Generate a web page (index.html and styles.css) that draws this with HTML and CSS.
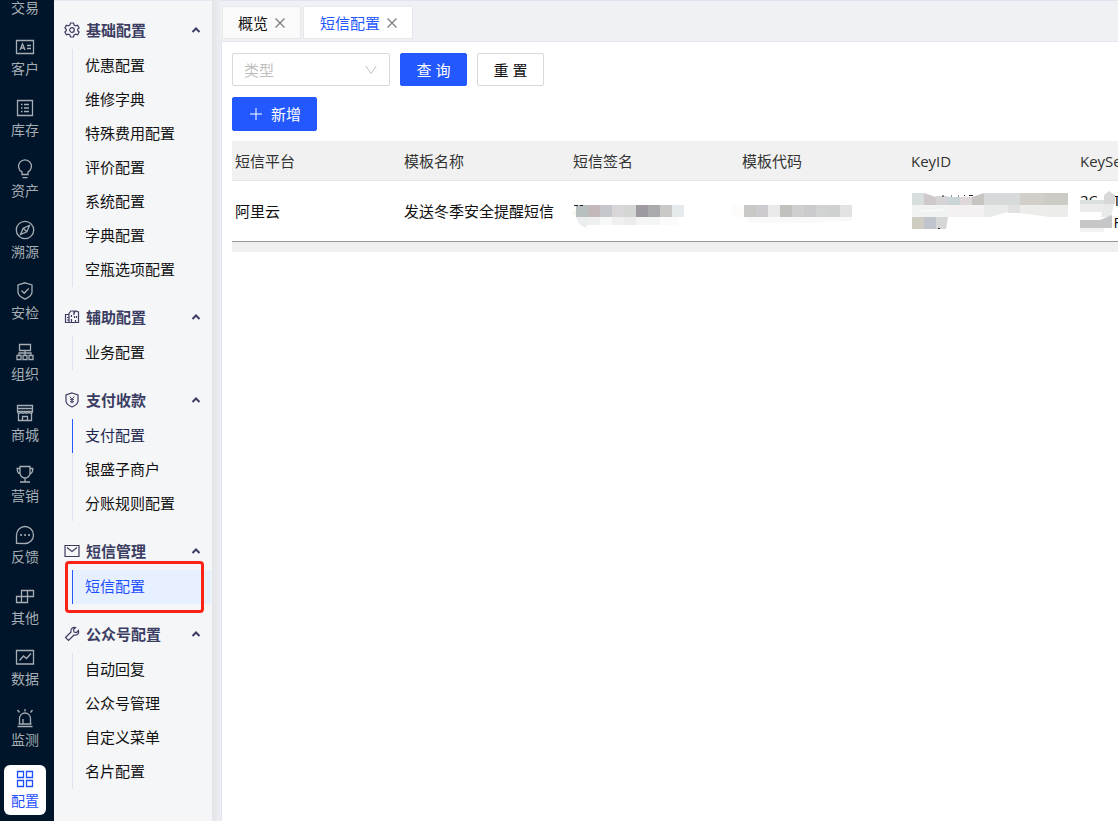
FILE: index.html
```html
<!DOCTYPE html>
<html lang="zh-CN">
<head>
<meta charset="utf-8">
<meta name="viewport" content="width=device-width, initial-scale=1">
<title>短信配置</title>
<link rel="stylesheet" href="styles.css">
</head>
<body>
<div class="app">
  <nav class="rail" aria-label="主导航">
    <a class="rail-item" href="#"><svg class="rail-icon" viewBox="0 0 20 20"><path d="M3 7h14l-4-4M17 13H3l4 4"/></svg><span>交易</span></a>
    <a class="rail-item" href="#"><svg class="rail-icon" viewBox="0 0 20 20"><path d="M1.500 3.500h17v13h-17zM5 13l2.500-6L10 13M6 11h3M12 8.500h4M12 11.500h4"/></svg><span>客户</span></a>
    <a class="rail-item" href="#"><svg class="rail-icon" viewBox="0 0 20 20"><path d="M2.500 2.500h15v15h-15zM9 6.500h5M9 10h5M9 13.500h5M6 6.500h1.500M6 10h1.500M6 13.500h1.500"/></svg><span>库存</span></a>
    <a class="rail-item" href="#"><svg class="rail-icon" viewBox="0 0 20 20"><path d="M7 15.500v-2.600a6.400 6.400 0 1 1 6 0v2.600zM7.500 18.700h5"/></svg><span>资产</span></a>
    <a class="rail-item" href="#"><svg class="rail-icon" viewBox="0 0 20 20"><circle cx="10" cy="10" r="8.700"/><path d="M14.500 5.500l-2.700 6.300-6.300 2.700 2.700-6.300zM8.200 8.200l3.600 3.600"/></svg><span>溯源</span></a>
    <a class="rail-item" href="#"><svg class="rail-icon" viewBox="0 0 20 20"><path d="M10 1.800l7 2.200v7c0 3-2.500 5.200-7 7.200-4.500-2-7-4.200-7-7.200V4zM6.500 9.500l2.700 2.700 4.500-4.700"/></svg><span>安检</span></a>
    <a class="rail-item" href="#"><svg class="rail-icon" viewBox="0 0 20 20"><path d="M4.500 2.500h11v6h-11zM10 8.500v5M4 13.500v-2.500h12v2.500M2 13.500h4v4H2zM8 13.500h4v4H8zM14 13.500h4v4h-4z"/></svg><span>组织</span></a>
    <a class="rail-item" href="#"><svg class="rail-icon" viewBox="0 0 20 20"><path d="M2.500 2.500h15v6h-15zM2.500 5.500h15M3.500 10v7.500h13V10M7.500 17.500v-4h5v4"/><path d="M2.500 8.500c0 2.300 3.700 2.300 3.700 0 0 2.300 3.800 2.300 3.800 0 0 2.300 3.800 2.300 3.800 0 0 2.300 3.700 2.300 3.700 0"/></svg><span>商城</span></a>
    <a class="rail-item" href="#"><svg class="rail-icon" viewBox="0 0 20 20"><path d="M5 2.500h10v6.500a5 5 0 0 1-10 0zM5 4.500H2.200c0 3 .5 5 3.200 5.500M15 4.500h2.800c0 3-.5 5-3.200 5.500M10 14v4M5 18h10"/></svg><span>营销</span></a>
    <a class="rail-item" href="#"><svg class="rail-icon" viewBox="0 0 20 20"><path d="M1.500 18.300V10A8.500 8.500 0 1 1 10 18.500z"/><path class="dots" d="M6 10h.1M10 10h.1M14 10h.1"/></svg><span>反馈</span></a>
    <a class="rail-item" href="#"><svg class="rail-icon" viewBox="0 0 20 20"><path d="M6.500 4.500h12v6h-12zM12.500 4.500v12M1.500 10.500h11v6h-11zM6.500 10.500v6"/></svg><span>其他</span></a>
    <a class="rail-item" href="#"><svg class="rail-icon" viewBox="0 0 20 20"><path d="M1.500 3.500h17v13.500h-17zM4.500 13.500l4-4.500 3 2.500 4.500-5"/></svg><span>数据</span></a>
    <a class="rail-item" href="#"><svg class="rail-icon" viewBox="0 0 20 20"><path d="M4.500 16V10.500a5.500 5.500 0 0 1 11 0V16M2.500 18.500h15M3.500 16h13M8 16v-5M10 3.500V1M4.500 4.500L2.500 2M15.500 4.500l2-2.500"/></svg><span>监测</span></a>
    <a class="rail-item is-active" href="#" aria-current="page"><svg class="rail-icon" viewBox="0 0 20 20"><path d="M2.500 2.500h6v6h-6zM11.500 2.500h6v6h-6zM2.500 11.500h6v6h-6zM11.500 11.500h6v6h-6z"/></svg><span>配置</span></a>
  </nav>

  <aside class="menu" aria-label="配置菜单">
    <section class="group">
      <button class="group-head" type="button" aria-expanded="true"><svg class="group-icon" viewBox="0 0 16 16"><path d="M6.500 1h3l.6 2 1.500.9 2-.6 1.500 2.600L13.700 7.300v1.400l1.400 1.400-1.500 2.600-2-.6-1.500.9-.6 2h-3l-.6-2-1.500-.9-2 .6L.9 10.100l1.400-1.400V7.300L.9 5.900l1.500-2.600 2 .6L5.900 3z"/><circle cx="8" cy="8" r="2.300"/></svg><span>基础配置</span><svg class="caret" viewBox="0 0 10 10"><path d="M1.500 7L5 3.500 8.500 7"/></svg></button>
      <ul class="group-list">
        <li><a class="entry" href="#">优惠配置</a></li>
        <li><a class="entry" href="#">维修字典</a></li>
        <li><a class="entry" href="#">特殊费用配置</a></li>
        <li><a class="entry" href="#">评价配置</a></li>
        <li><a class="entry" href="#">系统配置</a></li>
        <li><a class="entry" href="#">字典配置</a></li>
        <li><a class="entry" href="#">空瓶选项配置</a></li>
      </ul>
    </section>
    <section class="group">
      <button class="group-head" type="button" aria-expanded="true"><svg class="group-icon" viewBox="0 0 16 16"><path d="M5 13.500H1.500v-8H5M5 13.500v-9l2-2.500h3v4M10 4.500l1.500-2.500 3 1v10.500H5M3 8.500h2M3 11h2M7.500 6v2M7.500 10v3.500M10.500 7v2M12.500 7v2M11.500 11v2.500"/></svg><span>辅助配置</span><svg class="caret" viewBox="0 0 10 10"><path d="M1.500 7L5 3.500 8.500 7"/></svg></button>
      <ul class="group-list">
        <li><a class="entry" href="#">业务配置</a></li>
      </ul>
    </section>
    <section class="group">
      <button class="group-head" type="button" aria-expanded="true"><svg class="group-icon" viewBox="0 0 16 16"><path d="M8 1l6 2v6c0 2.500-2.500 4.500-6 6-3.500-1.500-6-3.500-6-6V3z"/><path class="thin" d="M5.800 4.500L8 7.500l2.200-3M8 7.500V11.500M6 7.700h4M6 9.700h4"/></svg><span>支付收款</span><svg class="caret" viewBox="0 0 10 10"><path d="M1.500 7L5 3.500 8.500 7"/></svg></button>
      <ul class="group-list">
        <li><a class="entry is-marked" href="#">支付配置</a></li>
        <li><a class="entry" href="#">银盛子商户</a></li>
        <li><a class="entry" href="#">分账规则配置</a></li>
      </ul>
    </section>
    <section class="group">
      <button class="group-head" type="button" aria-expanded="true"><svg class="group-icon" viewBox="0 0 16 16"><path d="M1 2.500h14v11H1zM3 4.500L8 8.500l5-4"/></svg><span>短信管理</span><svg class="caret" viewBox="0 0 10 10"><path d="M1.500 7L5 3.500 8.500 7"/></svg></button>
      <ul class="group-list">
        <li class="highlighted"><a class="entry is-active" href="#" aria-current="page">短信配置</a></li>
      </ul>
    </section>
    <section class="group">
      <button class="group-head" type="button" aria-expanded="true"><svg class="group-icon" viewBox="0 0 16 16"><path d="M11.500 1.500L9.500 3.500l.5 2.500 2.500.5 2-2c.8 2.800-1.500 5.300-4.500 4.500L4.500 14.500 1.500 11.500 7 6c-.8-3 1.700-5.300 4.500-4.500z"/></svg><span>公众号配置</span><svg class="caret" viewBox="0 0 10 10"><path d="M1.500 7L5 3.500 8.500 7"/></svg></button>
      <ul class="group-list">
        <li><a class="entry" href="#">自动回复</a></li>
        <li><a class="entry" href="#">公众号管理</a></li>
        <li><a class="entry" href="#">自定义菜单</a></li>
        <li><a class="entry" href="#">名片配置</a></li>
      </ul>
    </section>
  </aside>

  <main class="main">
    <div class="tabs">
      <div class="tab"><a href="#">概览</a><button class="tab-close" type="button" aria-label="关闭概览"><svg viewBox="0 0 12 12"><path d="M1.500 1.500l9 9M10.500 1.500l-9 9"/></svg></button></div>
      <div class="tab is-active"><a href="#">短信配置</a><button class="tab-close" type="button" aria-label="关闭短信配置"><svg viewBox="0 0 12 12"><path d="M1.500 1.500l9 9M10.500 1.500l-9 9"/></svg></button></div>
    </div>

    <div class="content">
      <form class="filters">
        <div class="select-box">
          <select class="select" aria-label="类型"><option>类型</option></select>
          <svg class="select-arrow" viewBox="0 0 12 12"><path d="M.8 2L6 9.500 11.200 2"/></svg>
        </div>
        <button class="btn btn-primary" type="button">查 询</button>
        <button class="btn" type="button">重 置</button>
      </form>
      <div class="actions">
        <button class="btn btn-primary btn-add" type="button"><svg class="plus" viewBox="0 0 14 14"><path d="M7 1v12M1 7h12"/></svg><span>新增</span></button>
      </div>

      <div class="table-wrap">
        <table class="table">
          <thead>
            <tr><th>短信平台</th><th>模板名称</th><th>短信签名</th><th>模板代码</th><th>KeyID</th><th>KeySecret</th></tr>
          </thead>
          <tbody>
            <tr>
              <td>阿里云</td>
              <td>发送冬季安全提醒短信</td>
              <td>
                <svg class="mask" width="120" height="36" viewBox="0 0 120 36" aria-hidden="true">
                  <path fill="#f8f5ef" d="M-2 20l5-4v7z"/>
                  <path fill="#b8bfc1" d="M3 12h12v12H3z"/><path fill="#c3b9bb" d="M15 12h12v12H15z"/><path fill="#c5c7cd" d="M27 12h12v12H27z"/><path fill="#d8d6d8" d="M39 12h12v12H39z"/><path fill="#d4d6d4" d="M51 12h12v12H51z"/><path fill="#9f99a1" d="M63 12h12v12H63z"/><path fill="#aaaaad" d="M75 12h12v12H75z"/><path fill="#c9c8c7" d="M87 12h12v12H87z"/><path fill="#e5eaec" d="M99 12h12v12H99z"/>
                  <path stroke="#222" d="M1 12.500h4M7 12.500h3"/>
                  <path fill="#ebeeee" d="M3 24h12v8l-3 3-6-4z"/><path fill="#f0eff0" d="M15 24h12v8H15z"/><path fill="#f7f9f8" d="M27 24h12v8H27z"/><path fill="#f0f0f0" d="M39 24h12v8H39z"/><path fill="#ececed" d="M51 24h12v8H51z"/><path fill="#f4f5f5" d="M63 24h24v8H63z"/><path fill="#fbfbfb" d="M87 24h19v8H87z"/>
                </svg>
              </td>
              <td>
                <svg class="mask" width="120" height="36" viewBox="0 0 120 36" aria-hidden="true">
                  <path fill="#fdfcfa" d="M-10 12H2v12h-12z"/>
                  <path fill="#c8c9c7" d="M2 12h12v12H2z"/><path fill="#cecbd0" d="M14 12h12v12H14z"/><path fill="#eaeaeb" d="M26 12h12v12H26z"/><path fill="#c1c1bd" d="M38 12h12v12H38z"/><path fill="#d0cfcf" d="M50 12h12v12H50z"/><path fill="#cbcbcd" d="M62 12h12v12H62z"/><path fill="#d1d3d3" d="M74 12h12v12H74z"/><path fill="#cfd1d0" d="M86 12h12v12H86z"/><path fill="#e3e3e4" d="M98 12h12v12H98z"/>
                  <path fill="#f8f9f8" d="M2 24h108v4H84l-8 2H8z"/>
                </svg>
              </td>
              <td>
                <svg class="mask" width="160" height="36" viewBox="0 0 160 36" aria-hidden="true">
                  <path fill="#d8dddd" d="M1 0h12v12H1z"/><path fill="#cfc8cd" d="M13 0l12 4v8H13z"/><path fill="#d5d3d6" d="M25 3h12v9H25z"/><path fill="#cbd5d8" d="M37 4h12v8H37z"/><path fill="#dfd8d8" d="M49 4h12v8H49z"/><path fill="#c6c5c2" d="M61 4l12-4v12H61z"/><path fill="#d7dada" d="M73 0h36v12H73z"/><path fill="#d2cec9" d="M109 0h24v12h-24z"/><path fill="#cdcbc5" d="M133 0h24v12h-24z"/>
                  <path stroke="#222" d="M31 3h2M40 3h1M47 3h1M53 2.500h1M58 2.500h4"/>
                  <path fill="#f1f2f2" d="M1 12h36v12H1z"/><path fill="#f3f1f1" d="M37 12h36v12H37z"/><path fill="#e9eaea" d="M73 12h24v7l-18 5h-6z"/><path fill="#e1e1e2" d="M97 12h12v8H97z"/><path fill="#ececeb" d="M109 12h48v12h-18l-30-4z"/>
                  <path stroke="#fff" d="M9 18l24-1"/>
                  <path fill="#cfccc2" d="M1 24h12v12H1z"/><path fill="#c0c4cd" d="M13 24h12v12H13z"/><path fill="#d5d6d6" d="M25 24h12l-2 12H25z"/><path stroke="#222" d="M27 35.500h2"/>
                </svg>
              </td>
              <td class="secret">2Q5 T<br>vind F
                <svg class="mask mask-over" width="60" height="44" viewBox="0 0 60 44" aria-hidden="true">
                  <path fill="#fff" d="M0 9h18V0h15v40H0z"/>
                  <path fill="#dde0e0" d="M1 9h24l0-5 10 5v4H1z"/><path fill="#ececec" d="M1 13h24v8H1z"/><path fill="#d8d8d9" d="M25 4l5-4 6 4v9H25z"/><path fill="#e8e9e9" d="M25 13h10l-3 13h-10z"/><path fill="#c6c7c9" d="M1 29h20l12-5v13H1z"/><path fill="#f3f3f3" d="M1 37h24v4H1z"/>
                </svg>
              </td>
            </tr>
          </tbody>
        </table>
      </div>
    </div>
  </main>
</div>
</body>
</html>
```
FILE: styles.css
```css
* { box-sizing: border-box; }

body {
  margin: 0;
  font-family: "Open Sans", "Noto Sans CJK SC", sans-serif;
  font-size: 15px;
  line-height: 22px;
  color: #111;
}

a { color: inherit; text-decoration: none; }
button, select { font: inherit; color: inherit; }
svg { fill: none; stroke: currentColor; flex: none; }

.app { display: flex; height: 100vh; overflow: hidden; }

/* Icon rail */
.rail {
  display: flex;
  flex-direction: column;
  justify-content: flex-end;
  gap: 11px;
  flex: none;
  width: 54px;
  padding: 0 8px 6px 4px;
  background: #001529;
  color: #a6adb4;
  font-size: 14px;
}
.rail-item {
  display: flex;
  flex-direction: column;
  align-items: center;
  flex: none;
  gap: 1px;
  padding: 4px 0 3px;
  border-radius: 6px;
}
.rail-item.is-active { background: #fff; color: #1f50ff; }
.rail-icon { width: 20px; height: 20px; stroke-width: 1.3; }
.rail-icon .dots { stroke-width: 2; stroke-linecap: round; }

/* Side menu */
.menu {
  flex: none;
  width: 158px;
  border-top: 1px solid #e4e6f2;
  background: #f5f6f8;
}
.group-head {
  display: flex;
  align-items: center;
  width: 100%;
  padding: 19px 10px 8px;
  border: 0;
  background: none;
  color: #3b3d62;
  font-weight: 600;
  text-align: left;
}
.group:first-child .group-head { padding-top: 18px; }
.group-icon { width: 16px; height: 16px; margin-right: 6px; stroke-width: 1.2; }
.group-icon .thin { stroke-width: 1; }
.caret { width: 10px; height: 10px; margin-left: auto; margin-right: 1px; stroke-width: 2; }
.group-list {
  margin: 0 1px 0 18px;
  padding: 0;
  border-left: 1px solid #e0e2f0;
  list-style: none;
}
.entry {
  display: block;
  margin-left: -1px;
  padding: 5px 0 7px 12px;
  border-left: 1px solid transparent;
}
.entry.is-marked { border-color: #2458ff; color: #20264f; }
.entry.is-active { border-color: #2458ff; background: #e6f0ff; color: #1f50ff; }
.highlighted { position: relative; }
.highlighted::after {
  content: "";
  position: absolute;
  inset: -9px 7px -9px -8px;
  border: 3px solid #fb2316;
  border-radius: 4px;
  pointer-events: none;
}

/* Main area */
.main {
  flex: 1;
  display: flex;
  flex-direction: column;
  min-width: 0;
  padding-left: 9px;
  background: linear-gradient(to right, #e3e5e9, #eceef3 9px, #f0f1f5 9px);
}
.tabs {
  display: flex;
  gap: 2px;
  padding: 5px 0 2px 1px;
  border-top: 1px solid #e1e3f0;
}
.tab {
  display: flex;
  align-items: center;
  gap: 6px;
  padding: 5px 14px 4px 15px;
  border: 1px solid #e8e8e8;
  border-radius: 2px 2px 0 0;
  background: #fafafa;
}
.tab.is-active { padding-left: 16px; background: #fff; color: #2458ff; }
.tab-close {
  display: flex;
  padding: 0;
  border: 0;
  background: none;
  color: #7c7c7c;
}
.tab-close svg { width: 12px; height: 12px; stroke-width: 1.2; }
.content {
  flex: 1;
  min-height: 0;
  padding: 11px 0 0 10px;
  border: solid #e2e4ef;
  border-width: 1px 0 0 1px;
  background: #fff;
}
.filters { display: flex; gap: 10px; }
.select-box { position: relative; width: 158px; }
.select {
  appearance: none;
  width: 100%;
  height: 33px;
  padding: 0 30px 0 11px;
  border: 1px solid #d9d9d9;
  border-radius: 2px;
  background: #fff;
  color: #bfbfbf;
}
.select-arrow {
  position: absolute;
  top: 11px;
  right: 13px;
  width: 12px;
  height: 12px;
  color: #bfbfbf;
  pointer-events: none;
}
.btn {
  min-width: 67px;
  height: 33px;
  padding: 0 15px;
  border: 1px solid #d9d9d9;
  border-radius: 2px;
  background: #fff;
}
.btn-primary { border-color: #2458ff; background: #2458ff; color: #fff; }
.actions { display: flex; padding: 11px 0 10px; }
.btn-add { display: flex; align-items: center; gap: 8px; height: 34px; padding: 0 15px 0 16px; }
.plus { width: 14px; height: 14px; }

/* Table */
.table-wrap { overflow: hidden; border-bottom: 10px solid #f0f0f0; }
.table {
  width: 1014px;
  border-collapse: separate;
  border-spacing: 0;
  table-layout: fixed;
}
.table th {
  height: 40px;
  padding: 0 3px;
  border-bottom: 1px solid #e6e6e6;
  background: #f1f1f1;
  color: #333;
  font-weight: 400;
  text-align: left;
}
.table td {
  height: 61px;
  padding: 0 3px;
  border-bottom: 1px solid #999;
  white-space: nowrap;
}
.mask { display: block; overflow: visible; }
.mask path[fill] { stroke: none; }
.table .secret { position: relative; }
.mask-over { position: absolute; top: 10px; left: 2px; }
```
